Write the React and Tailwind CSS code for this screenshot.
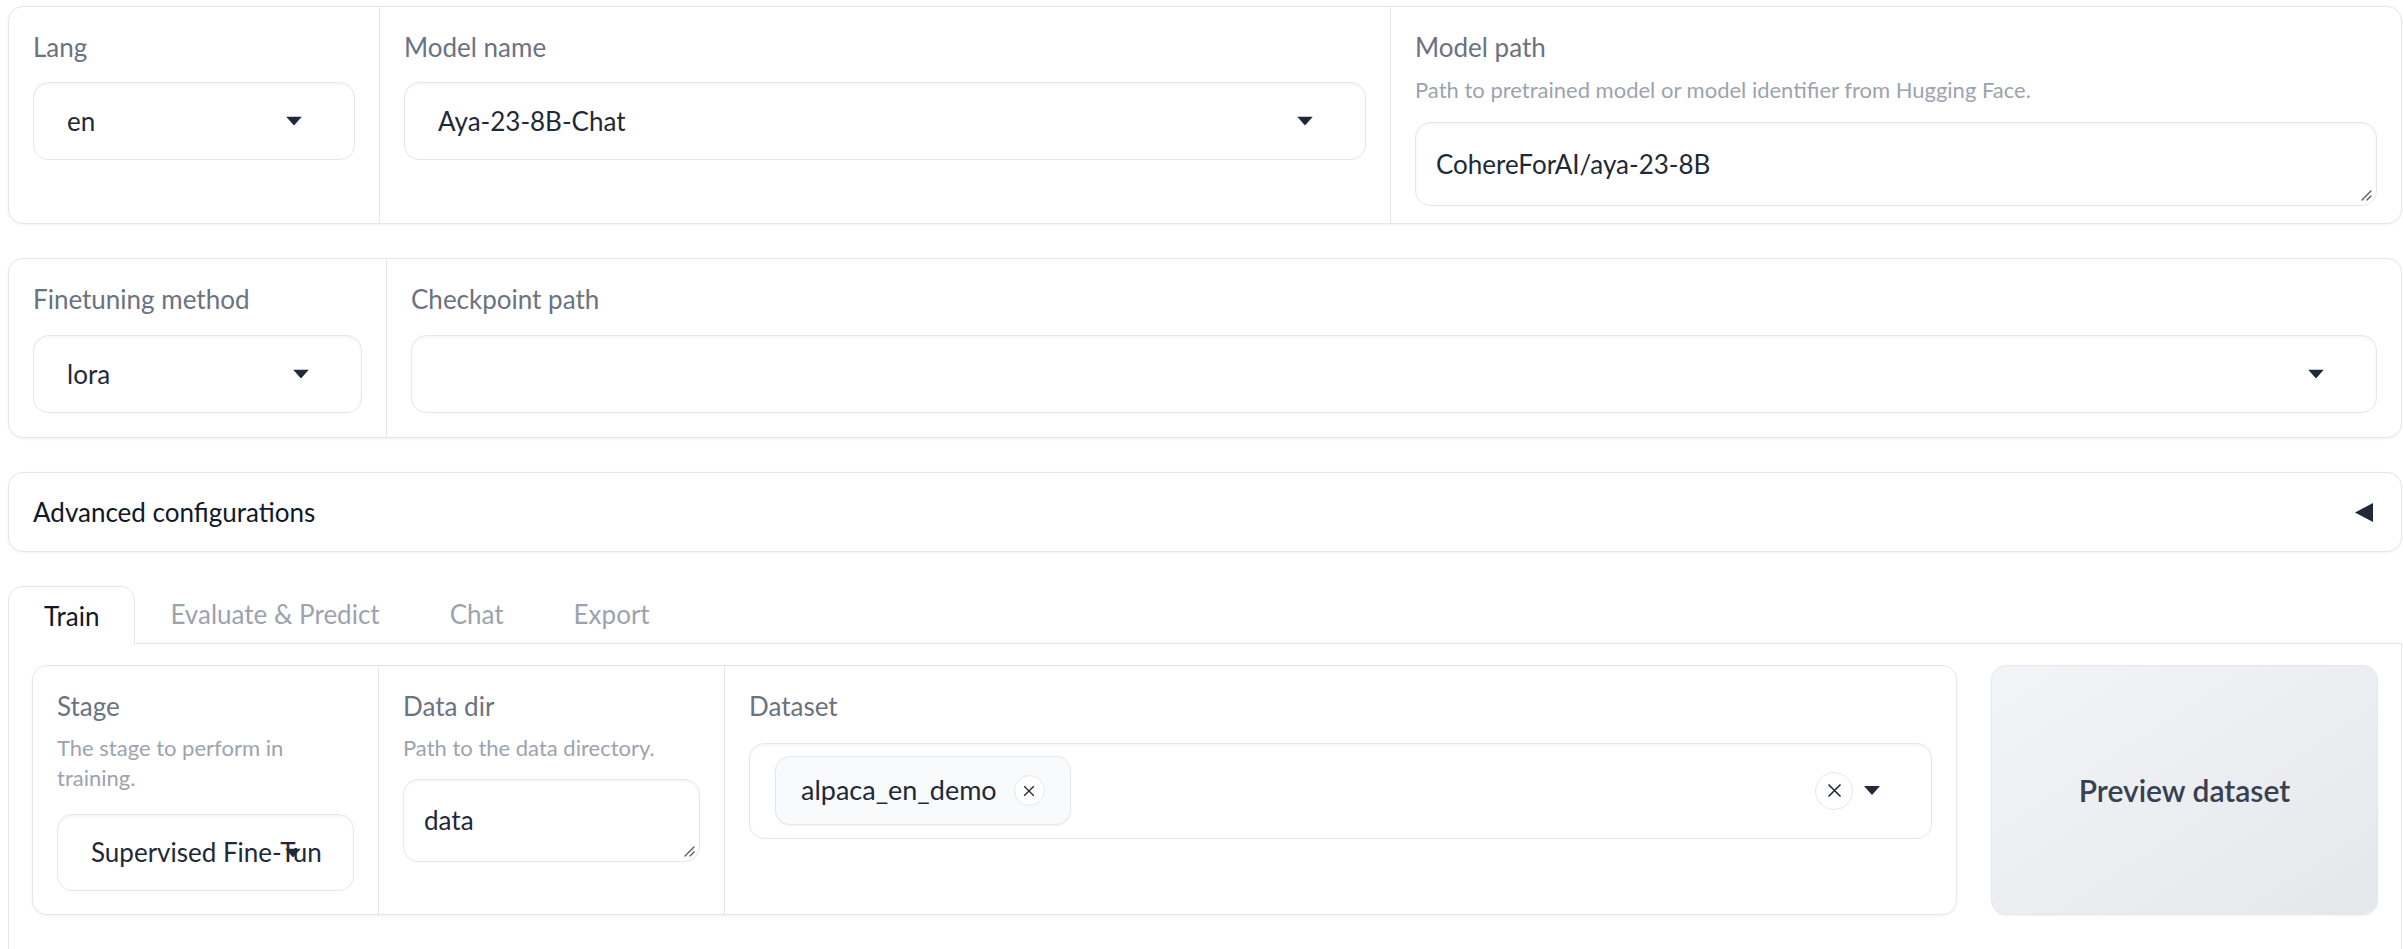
function Caret({ className = "" }) {
  return (
    <svg className={className} width="16" height="9" viewBox="0 0 16 9">
      <path d="M0 0 L16 0 L8 9 Z" fill="#1f2937" />
    </svg>
  );
}

function ResizeGrip() {
  return (
    <svg className="absolute bottom-[4px] right-[4px]" width="12" height="12" viewBox="0 0 12 12">
      <path d="M11 2 L2 11 M11 7 L7 11" stroke="#4b5563" strokeWidth="1.2" strokeLinecap="round" />
    </svg>
  );
}

function Label({ children }) {
  return <div className="text-[26px] leading-[36px] text-[#6b7280]">{children}</div>;
}

function Info({ children, className = "" }) {
  return <div className={`text-[22px] leading-[30px] text-[#9ca3af] ${className}`}>{children}</div>;
}

function Dropdown({ value, className = "" }) {
  return (
    <div
      className={`relative flex h-[78px] items-center rounded-[15px] border border-[#e5e7eb] bg-white pl-[33px] pr-[31px] shadow-[inset_0_2px_3px_rgba(0,0,0,0.04)] ${className}`}
    >
      <div className="min-w-0 flex-1 overflow-hidden whitespace-nowrap text-[26px] text-[#1f2937]">{value}</div>
      <Caret className="absolute right-[52px] top-1/2 -translate-y-1/2" />
    </div>
  );
}

function TextBox({ value, className = "" }) {
  return (
    <div
      className={`relative flex h-[84px] items-center rounded-[15px] border border-[#e5e7eb] bg-white px-[20px] text-[26px] text-[#1f2937] shadow-[inset_0_2px_3px_rgba(0,0,0,0.04)] ${className}`}
    >
      {value}
      <ResizeGrip />
    </div>
  );
}

function Block({ children }) {
  return (
    <div className="flex rounded-[15px] border border-[#e5e7eb] bg-white shadow-[0_1px_3px_rgba(0,0,0,0.06)]">
      {children}
    </div>
  );
}

function ClearIcon({ size, cross }) {
  return (
    <span
      className="flex shrink-0 items-center justify-center rounded-full border-[1.5px] border-[#e5e7eb] bg-white"
      style={{ width: size, height: size }}
    >
      <svg width={cross} height={cross} viewBox="0 0 10 10">
        <path d="M1 1 L9 9 M9 1 L1 9" stroke="#1f2937" strokeWidth="1.1" />
      </svg>
    </span>
  );
}

export default function App() {
  return (
    <div className="min-h-screen overflow-hidden bg-white pl-[8px] pr-[1px] pt-[6px] font-['Lato',sans-serif]">
      <div className="flex flex-col gap-[34px]">
        <Block>
          <div className="flex w-[370px] shrink-0 flex-col px-[24px] pb-[24px] pt-[22px]">
            <Label>Lang</Label>
            <Dropdown value="en" className="mt-[17px]" />
          </div>
          <div className="flex min-w-0 flex-1 flex-col border-l border-[#e5e7eb] px-[24px] pb-[24px] pt-[22px]">
            <Label>Model name</Label>
            <Dropdown value="Aya-23-8B-Chat" className="mt-[17px]" />
          </div>
          <div className="flex min-w-0 flex-1 flex-col border-l border-[#e5e7eb] px-[24px] pb-[17px] pt-[22px]">
            <Label>Model path</Label>
            <Info className="mt-[10px]">Path to pretrained model or model identifier from Hugging Face.</Info>
            <TextBox value="CohereForAI/aya-23-8B" className="mt-[17px]" />
          </div>
        </Block>

        <Block>
          <div className="flex w-[377px] shrink-0 flex-col px-[24px] pb-[24px] pt-[22px]">
            <Label>Finetuning method</Label>
            <Dropdown value="lora" className="mt-[18px]" />
          </div>
          <div className="flex min-w-0 flex-1 flex-col border-l border-[#e5e7eb] px-[24px] pb-[24px] pt-[22px]">
            <Label>Checkpoint path</Label>
            <Dropdown value="" className="mt-[18px]" />
          </div>
        </Block>

        <div className="flex h-[80px] items-center justify-between rounded-[15px] border border-[#e5e7eb] bg-white pl-[24px] pr-[28px] shadow-[0_1px_3px_rgba(0,0,0,0.06)]">
          <span className="text-[26px] text-[#111827]">Advanced configurations</span>
          <svg width="18" height="19" viewBox="0 0 18 19">
            <path d="M18 0 L18 19 L0 9.5 Z" fill="#1f2937" />
          </svg>
        </div>

        <div className="flex flex-col">
          <div className="flex h-[58px] items-stretch">
            <div className="relative z-10 -mb-px flex items-center rounded-t-[15px] border border-b-0 border-[#e5e7eb] bg-white px-[35px] text-[26px] text-[#111827]">
              Train
            </div>
            <div className="flex flex-1 items-center border-b border-[#e5e7eb] text-[26px] text-[#9ca3af]">
              <span className="px-[35px]">Evaluate &amp; Predict</span>
              <span className="px-[35px]">Chat</span>
              <span className="px-[35px]">Export</span>
            </div>
          </div>
          <div className="h-[400px] border-x border-[#e5e7eb] bg-white px-[23px] pt-[21px]">
            <div className="flex gap-[34px]">
              <div className="flex min-w-0 flex-1 rounded-[15px] border border-[#e5e7eb] bg-white shadow-[0_1px_3px_rgba(0,0,0,0.06)]">
                <div className="flex w-[345px] shrink-0 flex-col px-[24px] pb-[23px] pt-[22px]">
                  <Label>Stage</Label>
                  <Info className="mt-[9px]">The stage to perform in training.</Info>
                  <Dropdown value="Supervised Fine-Tuning" className="mt-[21px] !h-[77px]" />
                </div>
                <div className="flex w-[346px] shrink-0 flex-col border-l border-[#e5e7eb] px-[24px] pt-[22px]">
                  <Label>Data dir</Label>
                  <Info className="mt-[9px]">Path to the data directory.</Info>
                  <TextBox value="data" className="mt-[16px] !h-[83px]" />
                </div>
                <div className="flex min-w-0 flex-1 flex-col border-l border-[#e5e7eb] px-[24px] pt-[22px]">
                  <Label>Dataset</Label>
                  <div className="mt-[19px] flex h-[96px] items-start rounded-[15px] border border-[#e5e7eb] bg-white pl-[25px] pr-[51px] pt-[12px] shadow-[inset_0_2px_3px_rgba(0,0,0,0.04)]">
                    <div className="flex h-[69px] items-center gap-[17px] rounded-[15px] border border-[#e5e7eb] bg-[#f9fafb] pl-[25px] pr-[25px] text-[27px] text-[#1f2937] shadow-[0_1px_2px_rgba(0,0,0,0.06)]">
                      <span>alpaca_en_demo</span>
                      <ClearIcon size={31} cross={12} />
                    </div>
                    <div className="ml-auto flex h-[69px] items-center gap-[11px]">
                      <ClearIcon size={38} cross={15} />
                      <Caret />
                    </div>
                  </div>
                </div>
              </div>
              <button className="flex h-[250px] w-[387px] shrink-0 items-center justify-center rounded-[15px] border border-[#e5e7eb] bg-gradient-to-br from-[#f3f4f6] to-[#e5e7eb] text-[30px] font-semibold text-[#374151] shadow-[0_1px_3px_rgba(0,0,0,0.05)]">
                Preview dataset
              </button>
            </div>
          </div>
        </div>
      </div>
    </div>
  );
}
